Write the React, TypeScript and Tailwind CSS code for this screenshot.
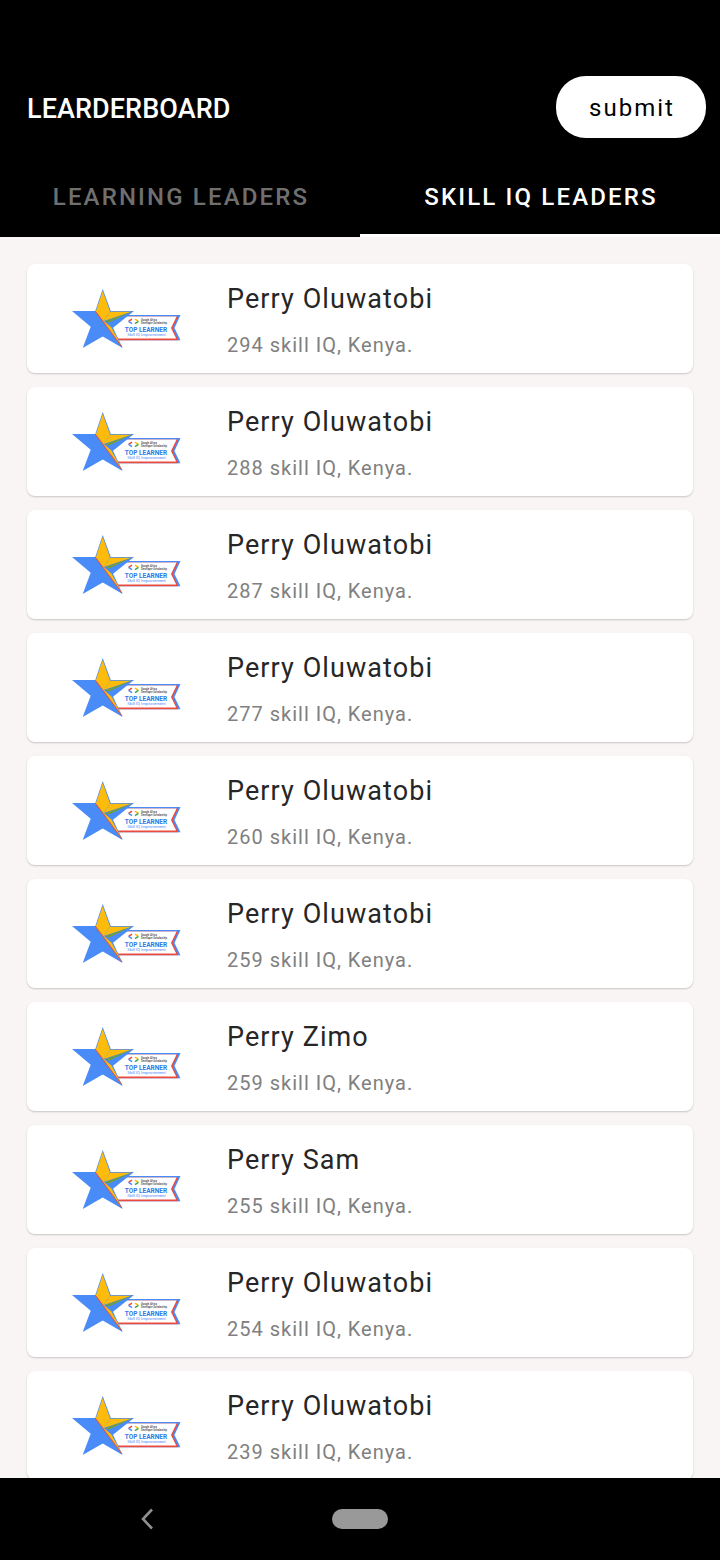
const leaders = [
  { name: 'Perry Oluwatobi', score: 294 },
  { name: 'Perry Oluwatobi', score: 288 },
  { name: 'Perry Oluwatobi', score: 287 },
  { name: 'Perry Oluwatobi', score: 277 },
  { name: 'Perry Oluwatobi', score: 260 },
  { name: 'Perry Oluwatobi', score: 259 },
  { name: 'Perry Zimo', score: 259 },
  { name: 'Perry Sam', score: 255 },
  { name: 'Perry Oluwatobi', score: 254 },
  { name: 'Perry Oluwatobi', score: 239 },
]

// Skill IQ badge: star on the left with the ribbon tucked behind it
function Badge() {
  return (
    <svg width="110" height="60" viewBox="0 0 110 60" className="shrink-0">
      {/* ribbon */}
      <path d="M40 26H108.5L102.5 39L108.5 51.2H40Z" fill="#4a8cf7" />
      <path d="M40 27.6H106.2L100.6 39L106.2 51.2H40Z" fill="#ea4b3c" />
      <path d="M40 27.6H104.6L99 39L104.2 49.6H40Z" fill="#ffffff" />
      {/* logo mark */}
      <path d="M60 30.2L56.6 32.4" fill="none" stroke="#ea4b3c" strokeWidth="1.5" />
      <path d="M56.6 32.4L60 34.6" fill="none" stroke="#4a8cf7" strokeWidth="1.5" />
      <path d="M63 30.2L66.4 32.4" fill="none" stroke="#fdbb0b" strokeWidth="1.5" />
      <path d="M66.4 32.4L63 34.6" fill="none" stroke="#34a853" strokeWidth="1.5" />
      <text x="69" y="31.6" fontSize="2.6" fontWeight="500" fill="#444444" className="font-['Roboto',sans-serif]">Google Africa</text>
      <text x="69" y="34.8" fontSize="2.6" fontWeight="500" fill="#444444" className="font-['Roboto',sans-serif]">Developer Scholarship</text>
      <text x="74" y="42.8" textAnchor="middle" fontSize="6.5" fontWeight="700" fill="#2f7be6" className="font-['Roboto',sans-serif]">TOP LEARNER</text>
      <text x="74.5" y="47.2" textAnchor="middle" fontSize="4.2" fill="#4a8cf7" className="font-['Roboto',sans-serif]">Skill IQ Improvement</text>
      {/* star */}
      <path d="M30.7 0L38.8 22H62L41 38.7L50.6 59L30.7 47.5L10.7 59L18.7 37.7L0 22H23.3Z" fill="#4a8cf7" />
      <path d="M30.7 2L23.8 22.6L31.7 32L38 22.6Z" fill="#fdbb0b" />
      <path d="M59.6 22.8H38L31.7 32Z" fill="#fdbb0b" />
      <path d="M59.6 22.8L33 32.2L37 33.4Z" fill="#6f9f3a" />
      <path d="M23.8 22.6L49.8 57.4L39.4 38.4L31.7 32Z" fill="#fdbb0b" />
      <path d="M23.4 22.4L50 58" fill="none" stroke="#ea4b3c" strokeWidth="1" />
    </svg>
  )
}

function LeaderCard({ name, score }: { name: string; score: number }) {
  return (
    <div className="h-[109px] shrink-0 bg-white rounded-[8px] shadow-[0_1px_2px_rgba(0,0,0,0.2)] flex pl-[45px]">
      <div className="pt-[25px]">
        <Badge />
      </div>
      <div className="ml-[45px] pt-[18px]">
        <p className="text-[27px] leading-[34px] tracking-[1.08px] text-[#262626]">{name}</p>
        <p className="mt-[17px] text-[20px] leading-[24px] tracking-[1px] text-[#808080]">
          {score} skill IQ, Kenya.
        </p>
      </div>
    </div>
  )
}

export default function App() {
  return (
    <div className="h-[1560px] w-[720px] flex flex-col overflow-hidden bg-black font-['Roboto',sans-serif]">
      <header className="shrink-0 bg-black">
        <div className="h-[168px] pt-[76px] pl-[27px] pr-[14px] flex items-start justify-between">
          <h1 className="h-[62px] pt-[4px] flex items-center text-[27px] font-medium tracking-[0.08px] text-white">LEARDERBOARD</h1>
          <button className="h-[62px] w-[150px] pt-[2px] pl-[2px] rounded-[30px] bg-white text-black text-[24px] tracking-[2px]">
            submit
          </button>
        </div>
        <div className="h-[69px] flex">
          <div className="w-1/2 flex items-start justify-center pt-[11px] pl-[2px] text-[24px] leading-[36px] font-medium tracking-[2.15px] text-white/45">
            LEARNING LEADERS
          </div>
          <div className="w-1/2 flex items-start justify-center pt-[11px] pl-[2px] text-[24px] leading-[36px] font-medium tracking-[2.15px] text-white border-b-[3px] border-white">
            SKILL IQ LEADERS
          </div>
        </div>
      </header>

      <main className="flex-1 min-h-0 overflow-hidden bg-[#f9f5f4] px-[27px] pt-[27px] flex flex-col gap-[14px]">
        {leaders.map((l, i) => (
          <LeaderCard key={i} name={l.name} score={l.score} />
        ))}
      </main>

      <nav className="h-[82px] shrink-0 bg-black flex items-center relative">
        <svg width="16" height="24" viewBox="0 0 16 24" className="ml-[139px]">
          <path d="M13 2.5L4 12L13 21.5" fill="none" stroke="#8f8f8f" strokeWidth="2.6" />
        </svg>
        <div className="ml-[177px] h-[20px] w-[56px] rounded-[10px] bg-[#999999]" />
      </nav>
    </div>
  )
}
